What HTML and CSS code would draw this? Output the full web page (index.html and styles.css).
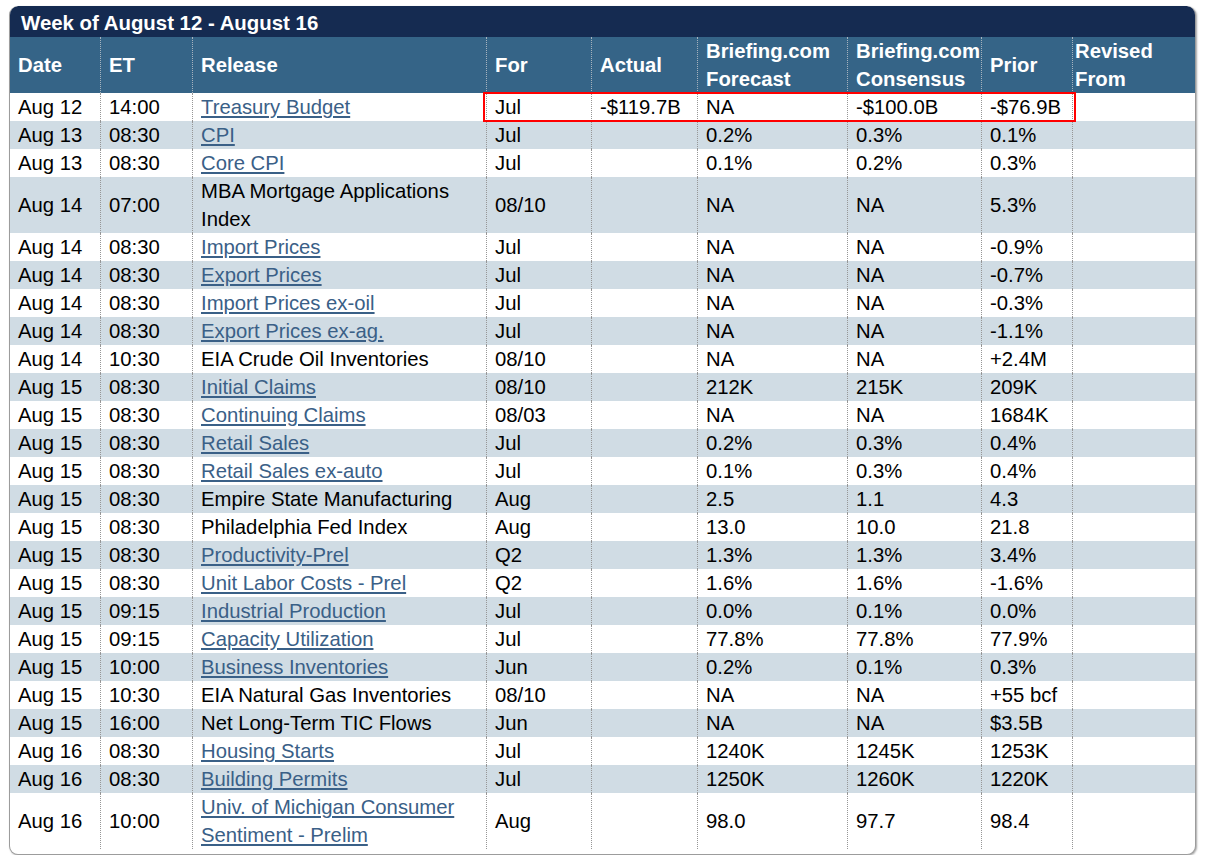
FILE: index.html
```html
<!DOCTYPE html>
<html lang="en">
<head>
<meta charset="utf-8">
<title>Economic Calendar</title>
<link rel="stylesheet" href="styles.css">
</head>
<body>
<div class="panel">
  <div class="title">Week of August 12 - August 16</div>
  <table class="cal">
    <thead>
      <tr>
        <th class="c-date">Date</th>
        <th class="c-et">ET</th>
        <th class="c-rel">Release</th>
        <th class="c-for">For</th>
        <th class="c-act">Actual</th>
        <th class="c-fc">Briefing.com Forecast</th>
        <th class="c-cons">Briefing.com Consensus</th>
        <th class="c-prior">Prior</th>
        <th class="c-rev">Revised From</th>
      </tr>
    </thead>
    <tbody>
      <tr><td>Aug 12</td><td>14:00</td><td><a href="#">Treasury Budget</a></td><td>Jul</td><td>-$119.7B</td><td>NA</td><td>-$100.0B</td><td>-$76.9B</td><td></td></tr>
      <tr><td>Aug 13</td><td>08:30</td><td><a href="#">CPI</a></td><td>Jul</td><td></td><td>0.2%</td><td>0.3%</td><td>0.1%</td><td></td></tr>
      <tr><td>Aug 13</td><td>08:30</td><td><a href="#">Core CPI</a></td><td>Jul</td><td></td><td>0.1%</td><td>0.2%</td><td>0.3%</td><td></td></tr>
      <tr><td>Aug 14</td><td>07:00</td><td>MBA Mortgage Applications Index</td><td>08/10</td><td></td><td>NA</td><td>NA</td><td>5.3%</td><td></td></tr>
      <tr><td>Aug 14</td><td>08:30</td><td><a href="#">Import Prices</a></td><td>Jul</td><td></td><td>NA</td><td>NA</td><td>-0.9%</td><td></td></tr>
      <tr><td>Aug 14</td><td>08:30</td><td><a href="#">Export Prices</a></td><td>Jul</td><td></td><td>NA</td><td>NA</td><td>-0.7%</td><td></td></tr>
      <tr><td>Aug 14</td><td>08:30</td><td><a href="#">Import Prices ex-oil</a></td><td>Jul</td><td></td><td>NA</td><td>NA</td><td>-0.3%</td><td></td></tr>
      <tr><td>Aug 14</td><td>08:30</td><td><a href="#">Export Prices ex-ag.</a></td><td>Jul</td><td></td><td>NA</td><td>NA</td><td>-1.1%</td><td></td></tr>
      <tr><td>Aug 14</td><td>10:30</td><td>EIA Crude Oil Inventories</td><td>08/10</td><td></td><td>NA</td><td>NA</td><td>+2.4M</td><td></td></tr>
      <tr><td>Aug 15</td><td>08:30</td><td><a href="#">Initial Claims</a></td><td>08/10</td><td></td><td>212K</td><td>215K</td><td>209K</td><td></td></tr>
      <tr><td>Aug 15</td><td>08:30</td><td><a href="#">Continuing Claims</a></td><td>08/03</td><td></td><td>NA</td><td>NA</td><td>1684K</td><td></td></tr>
      <tr><td>Aug 15</td><td>08:30</td><td><a href="#">Retail Sales</a></td><td>Jul</td><td></td><td>0.2%</td><td>0.3%</td><td>0.4%</td><td></td></tr>
      <tr><td>Aug 15</td><td>08:30</td><td><a href="#">Retail Sales ex-auto</a></td><td>Jul</td><td></td><td>0.1%</td><td>0.3%</td><td>0.4%</td><td></td></tr>
      <tr><td>Aug 15</td><td>08:30</td><td>Empire State Manufacturing</td><td>Aug</td><td></td><td>2.5</td><td>1.1</td><td>4.3</td><td></td></tr>
      <tr><td>Aug 15</td><td>08:30</td><td>Philadelphia Fed Index</td><td>Aug</td><td></td><td>13.0</td><td>10.0</td><td>21.8</td><td></td></tr>
      <tr><td>Aug 15</td><td>08:30</td><td><a href="#">Productivity-Prel</a></td><td>Q2</td><td></td><td>1.3%</td><td>1.3%</td><td>3.4%</td><td></td></tr>
      <tr><td>Aug 15</td><td>08:30</td><td><a href="#">Unit Labor Costs - Prel</a></td><td>Q2</td><td></td><td>1.6%</td><td>1.6%</td><td>-1.6%</td><td></td></tr>
      <tr><td>Aug 15</td><td>09:15</td><td><a href="#">Industrial Production</a></td><td>Jul</td><td></td><td>0.0%</td><td>0.1%</td><td>0.0%</td><td></td></tr>
      <tr><td>Aug 15</td><td>09:15</td><td><a href="#">Capacity Utilization</a></td><td>Jul</td><td></td><td>77.8%</td><td>77.8%</td><td>77.9%</td><td></td></tr>
      <tr><td>Aug 15</td><td>10:00</td><td><a href="#">Business Inventories</a></td><td>Jun</td><td></td><td>0.2%</td><td>0.1%</td><td>0.3%</td><td></td></tr>
      <tr><td>Aug 15</td><td>10:30</td><td>EIA Natural Gas Inventories</td><td>08/10</td><td></td><td>NA</td><td>NA</td><td>+55 bcf</td><td></td></tr>
      <tr><td>Aug 15</td><td>16:00</td><td>Net Long-Term TIC Flows</td><td>Jun</td><td></td><td>NA</td><td>NA</td><td>$3.5B</td><td></td></tr>
      <tr><td>Aug 16</td><td>08:30</td><td><a href="#">Housing Starts</a></td><td>Jul</td><td></td><td>1240K</td><td>1245K</td><td>1253K</td><td></td></tr>
      <tr><td>Aug 16</td><td>08:30</td><td><a href="#">Building Permits</a></td><td>Jul</td><td></td><td>1250K</td><td>1260K</td><td>1220K</td><td></td></tr>
      <tr><td>Aug 16</td><td>10:00</td><td><a href="#">Univ. of Michigan Consumer Sentiment - Prelim</a></td><td>Aug</td><td></td><td>98.0</td><td>97.7</td><td>98.4</td><td></td></tr>
    </tbody>
  </table>
  <div class="highlight"></div>
</div>
</body>
</html>
```

FILE: styles.css
```css
html, body {
  margin: 0;
  padding: 0;
  background: #ffffff;
}

body {
  padding: 6px 0 0 9px;
  font-family: "Liberation Sans", Arial, sans-serif;
  font-size: 20.3px;
  color: #000000;
}

.panel {
  position: relative;
  width: 1185px;
  border: 1px solid #9c9c9c;
  border-top: none;
  border-radius: 9px;
  padding-bottom: 5px;
  background: #ffffff;
  box-shadow: 1px 1px 2px rgba(0, 0, 0, 0.35);
  overflow: hidden;
}

.title {
  background: #152b51;
  color: #ffffff;
  font-weight: bold;
  font-size: 20.4px;
  line-height: 27px;
  padding: 4px 12px 0 12px;
  margin: 0 -1px;
  border-radius: 9px 9px 0 0;
}

.cal {
  width: 1185px;
  table-layout: fixed;
  border-collapse: separate;
  border-spacing: 0;
}

.cal th,
.cal td {
  box-sizing: border-box;
  padding: 0 4px 0 8px;
  line-height: 28px;
  text-align: left;
  vertical-align: middle;
  border-left: 1px dotted #969696;
}

.cal th:first-child,
.cal td:first-child {
  border-left: none;
}

.cal thead th {
  background: #356487;
  color: #ffffff;
  font-weight: bold;
  border-left-color: #a7b4bf;
}

.c-date { width: 90px; }
.c-et { width: 92px; }
.c-rel { width: 294px; }
.c-for { width: 105px; }
.c-act { width: 106px; }
.c-fc { width: 150px; }
.c-cons { width: 134px; }
.c-prior { width: 91px; }
.c-rev { width: 123px; }

.cal th.c-rev {
  padding-left: 2px;
}

.cal tbody tr:nth-child(even) td {
  background: #d0dce4;
}

.cal a {
  color: #3a6087;
  text-decoration: underline;
  text-decoration-thickness: 2px;
  text-underline-offset: 2px;
}

.highlight {
  position: absolute;
  left: 473px;
  top: 86px;
  width: 593px;
  height: 30px;
  box-sizing: border-box;
  border: 2px solid #ff0000;
  pointer-events: none;
}
```
